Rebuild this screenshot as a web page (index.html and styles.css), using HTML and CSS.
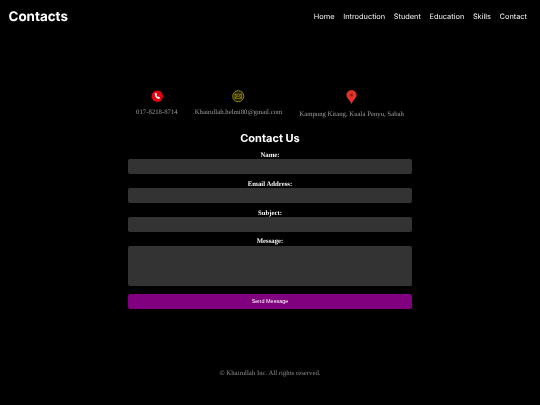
FILE: index.html
```html
<!DOCTYPE html>
<html lang="en">
<head>
<meta charset="utf-8">
<title>Contacts</title>
<link rel="stylesheet" href="styles.css">
</head>
<body>
<div class="page">
<header class="topbar">
  <div class="logo">Contacts</div>
  <nav class="nav">
    <a href="#">Home</a>
    <a href="#">Introduction</a>
    <a href="#">Student</a>
    <a href="#">Education</a>
    <a href="#">Skills</a>
    <a href="#">Contact</a>
  </nav>
</header>
<main class="main">
  <section class="info">
    <div class="info-item">
      <svg class="icon" viewBox="0 0 14 14">
        <circle cx="7" cy="7" r="6.4" fill="#e3000f"/>
        <path d="M4.600 3.700l1.200-.5 1 1.900-.8.7c.3.900.9 1.600 1.800 2.100l.8-.6 1.600 1.300-.6 1c-.4.500-1 .5-1.600.3C6 9.100 4.600 7.400 4.200 5.200c-.1-.6 0-1.100.4-1.500z" fill="#fff"/>
      </svg>
      <p>017-8218-8714</p>
    </div>
    <div class="info-item">
      <svg class="icon" viewBox="0 0 14 14">
        <circle cx="7" cy="7" r="6.200" fill="#1d1a00" stroke="#a59612" stroke-width="1"/>
        <path d="M3.400 4.600h7.200v4.800H3.400zM3.400 4.600L7 7.400l3.600-2.800M3.400 9.400L5.800 6.500M10.600 9.400L8.200 6.500" fill="none" stroke="#b8a716" stroke-width=".7"/>
      </svg>
      <p>Khairullah.helmi80@gmail.com</p>
    </div>
    <div class="info-item">
      <svg class="pin" viewBox="0 0 12 16">
        <path d="M6 .4C2.900.4.400 2.700.400 5.700c0 3.400 4 5 5.600 9.900 1.600-4.900 5.600-6.500 5.600-9.900C11.600 2.700 9.100.4 6 .4z" fill="#e2332b"/>
        <circle cx="6" cy="5.600" r="1.700" fill="#9a1712"/>
      </svg>
      <p>Kampung Kitang, Kuala Penyu, Sabah</p>
    </div>
  </section>
  <h2 class="title">Contact Us</h2>
  <form class="form">
    <label class="field"><span class="label">Name:</span><input class="box" type="text"></label>
    <label class="field"><span class="label">Email Address:</span><input class="box" type="email"></label>
    <label class="field"><span class="label">Subject:</span><input class="box" type="text"></label>
    <label class="field"><span class="label">Message:</span><textarea class="box area"></textarea></label>
    <button class="send" type="button">Send Message</button>
  </form>
</main>
<footer class="footer">© Khairullah Inc. All rights reserved.</footer>
</div>
</body>
</html>
```
FILE: styles.css
```css
* { box-sizing: border-box; }
html, body { margin: 0; height: 100%; }
body {
  background: #000;
  color: #fff;
  font-family: "Liberation Serif", serif;
  overflow: hidden;
  text-rendering: geometricPrecision;
}
.page { filter: blur(0.45px); }
.topbar {
  display: flex;
  justify-content: space-between;
  align-items: center;
  height: 32px;
  padding: 0 13px 0 8.5px;
}
.logo {
  padding-top: 1.5px;
  font-family: Inter, sans-serif;
  font-weight: 700;
  font-size: 13.4px;
}
.nav { display: flex; gap: 8.6px; }
.nav a {
  font-family: Inter, sans-serif;
  font-size: 7.4px;
  color: #f4f4f4;
  text-decoration: none;
}
.main {
  display: flex;
  flex-direction: column;
  align-items: center;
  padding-top: 58px;
}
.info {
  display: flex;
  justify-content: center;
  gap: 17px;
  height: 40px;
}
.info-item {
  display: flex;
  flex-direction: column;
  align-items: center;
  gap: 5.8px;
}
.icon { display: block; flex: none; width: 12.5px; height: 12.5px; }
.pin { display: block; flex: none; width: 11px; height: 14.5px; }
.info-item p {
  margin: 0;
  font-size: 6.75px;
  line-height: 10px;
  color: #9c9c9c;
  white-space: nowrap;
}
.title {
  margin: 0;
  padding-top: .5px;
  font-family: Inter, sans-serif;
  font-size: 11px;
  font-weight: 700;
  line-height: 14.5px;
}
.form {
  width: 284px;
  margin-top: 6px;
  display: flex;
  flex-direction: column;
}
.field { display: flex; flex-direction: column; align-items: center; margin-bottom: 5.5px; }
.label {
  padding-top: 1.2px;
  font-size: 6.75px;
  font-weight: 700;
  line-height: 7.3px;
  color: #f4f4f4;
}
.box {
  display: block;
  width: 100%;
  height: 14.7px;
  border: 0;
  border-radius: 2px;
  background: #333;
  padding: 0;
  margin: 0;
}
.area {
  height: 40px;
  resize: none;
  background: linear-gradient(135deg, #333 0, #333 88%, #6a6a6a 90%, #333 92%, #333 95%, #6a6a6a 96%, #333 98%) right bottom / 5px 5px no-repeat, #333;
}
.send {
  margin-top: 3.2px;
  height: 14.5px;
  padding: 0 0 1px;
  border: 0;
  border-radius: 2px;
  background: #800080;
  color: #fff;
  font-family: "Liberation Sans", sans-serif;
  font-size: 5.5px;
}
.footer {
  margin-top: 60px;
  text-align: center;
  font-size: 6.75px;
  line-height: 10px;
  color: #8c8c8c;
}
```
